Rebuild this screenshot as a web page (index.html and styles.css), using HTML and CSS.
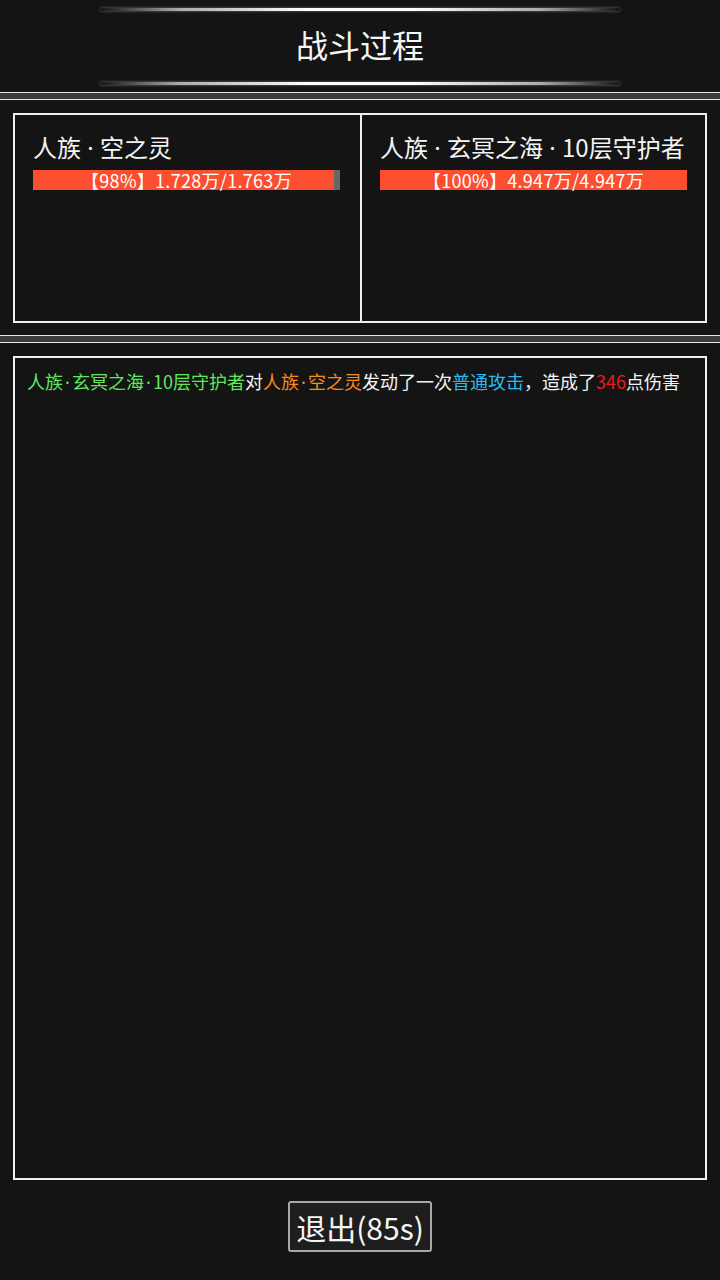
FILE: index.html
```html
<!DOCTYPE html>
<html lang="zh">
<head>
<meta charset="utf-8">
<link rel="stylesheet" href="styles.css">
</head>
<body>
<div class="page">
  <header class="header">
    <div class="glow"></div>
    <h1 class="title">战斗过程</h1>
    <div class="glow"></div>
  </header>
  <div class="sep"></div>
  <section class="fighters-wrap">
    <div class="fighters">
      <div class="fighter">
        <div class="name">人族<span class="dot">·</span>空之灵</div>
        <div class="hp"><div class="hp-fill" style="width:98%"></div><span class="hp-text">【98%】1.728万/1.763万</span></div>
      </div>
      <div class="fighter">
        <div class="name">人族<span class="dot">·</span>玄冥之海<span class="dot">·</span>10层守护者</div>
        <div class="hp"><div class="hp-fill" style="width:100%"></div><span class="hp-text">【100%】4.947万/4.947万</span></div>
      </div>
    </div>
  </section>
  <div class="sep"></div>
  <section class="log-wrap">
    <div class="log">
      <p class="log-line"><span class="c-green">人族<span class="dot">·</span>玄冥之海<span class="dot">·</span>10层守护者</span>对<span class="c-orange">人族<span class="dot">·</span>空之灵</span>发动了一次<span class="c-blue">普通攻击</span>，造成了<span class="c-red">346</span>点伤害</p>
    </div>
    <div class="actions">
      <button class="exit-btn">退出(85s)</button>
    </div>
  </section>
</div>
</body>
</html>
```

FILE: styles.css
```css
* { box-sizing: border-box; }
html, body {
  margin: 0;
  padding: 0;
  background: #141414;
}
body {
  font-family: "Noto Sans CJK SC", "Noto Sans", sans-serif;
  color: #f2f2f2;
}
.page {
  width: 720px;
  height: 1280px;
  display: flex;
  flex-direction: column;
  background: #141414;
}
.header {
  height: 92px;
  display: flex;
  flex-direction: column;
  align-items: center;
  padding-top: 8px;
}
.glow {
  width: 520px;
  height: 3px;
  background: linear-gradient(90deg, rgba(255,255,255,0) 0%, rgba(220,220,220,0.75) 15%, #ffffff 40%, #ffffff 60%, rgba(220,220,220,0.75) 85%, rgba(255,255,255,0) 100%);
  box-shadow: 0 0 3px rgba(255,255,255,0.4);
  border-radius: 2px;
}
.title {
  margin: 0;
  height: 71px;
  line-height: 67px;
  font-size: 32px;
  font-weight: 400;
  color: #f6f6f6;
}
.sep {
  height: 8px;
  border-top: 1px solid #e8e8e8;
  border-bottom: 1px solid #e8e8e8;
  background: #3c3c3c;
}
.fighters-wrap {
  height: 235px;
  padding: 13px 13px 0 13px;
}
.fighters {
  height: 210px;
  border: 2px solid #f0f0f0;
  display: grid;
  grid-template-columns: 345px 1fr;
}
.fighter {
  padding: 17px 0 0 18px;
}
.fighter + .fighter {
  border-left: 2px solid #f0f0f0;
}
.name {
  font-size: 24px;
  line-height: 30px;
  color: #f4f4f4;
  white-space: nowrap;
}
.dot {
  display: inline-block;
  font-family: "Noto Sans", "DejaVu Sans", sans-serif;
  text-align: center;
}
.name .dot {
  width: 19px;
}
.hp {
  position: relative;
  width: 307px;
  height: 20px;
  margin-top: 7px;
  background: #666;
}
.hp-fill {
  height: 100%;
  background: #fc4f2f;
}
.hp-text {
  position: absolute;
  inset: 0;
  text-align: center;
  font-size: 18px;
  line-height: 20px;
  letter-spacing: 0.3px;
  color: #fff;
  white-space: nowrap;
}
.log-wrap {
  flex: 1;
  padding: 13px 13px 0 13px;
  display: flex;
  flex-direction: column;
}
.log {
  height: 824px;
  border: 2px solid #f0f0f0;
  padding: 10px 12px;
}
.log-line {
  margin: 0;
  font-size: 18px;
  line-height: 26px;
  color: #f4f4f4;
  white-space: nowrap;
}
.log-line .dot {
  width: 9px;
}
.c-green { color: #5fe85f; }
.c-orange { color: #f98c1c; }
.c-blue { color: #2bbcef; }
.c-red { color: #f01a1a; }
.actions {
  display: flex;
  justify-content: center;
  padding-top: 21px;
}
.exit-btn {
  width: 144px;
  height: 51px;
  background: #1e1e1e;
  border: 2px solid #a8a8a8;
  border-radius: 3px;
  color: #f4f4f4;
  font-family: "Noto Sans CJK SC", "Noto Sans", sans-serif;
  font-size: 30px;
  line-height: 1;
  padding: 0;
}
```
